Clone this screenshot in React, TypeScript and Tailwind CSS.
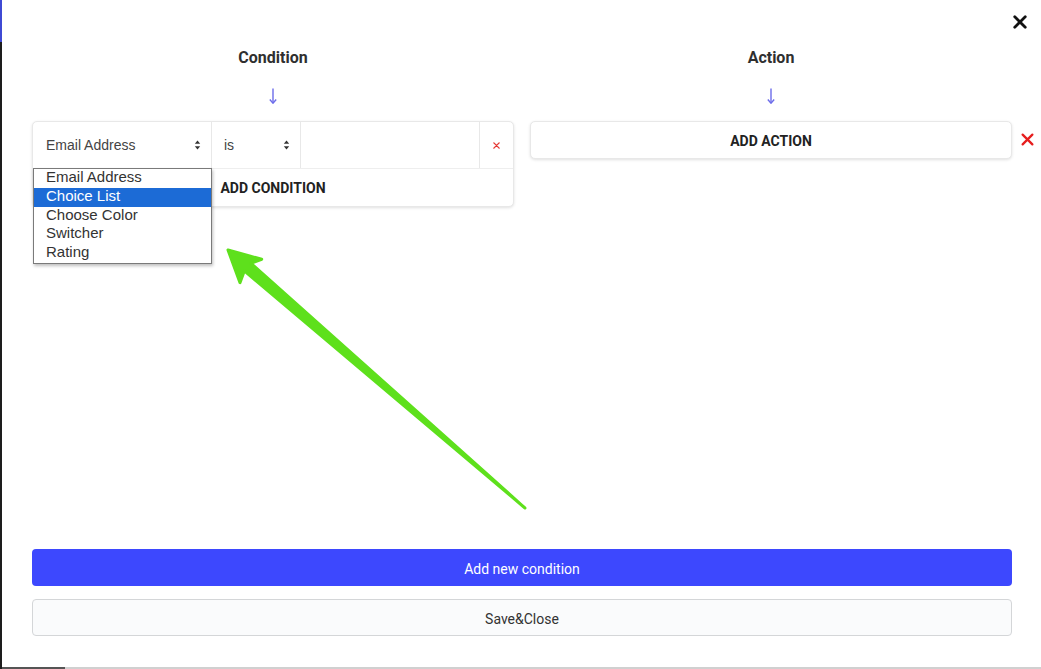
import React from 'react';

const fieldOptions = ['Email Address', 'Choice List', 'Choose Color', 'Switcher', 'Rating'];

function SelectArrows() {
  return (
    <svg width="7" height="12" viewBox="0 0 7 12" className="shrink-0">
      <path d="M0.8 4.8 L3.5 1.4 L6.2 4.8 Z" fill="#333" />
      <path d="M0.8 7.2 L3.5 10.6 L6.2 7.2 Z" fill="#333" />
    </svg>
  );
}

function DownArrow() {
  return (
    <svg width="10" height="16" viewBox="0 0 10 16">
      <path d="M5 0.5 V15" stroke="#6c6cea" strokeWidth="1.4" />
      <path d="M1.8 11.5 L5 15.2 L8.2 11.5" stroke="#6c6cea" strokeWidth="1.4" fill="none" />
    </svg>
  );
}

function Cross({ size, color, width }: { size: number; color: string; width: number }) {
  return (
    <svg width={size} height={size} viewBox="0 0 12 12">
      <path d="M1.5 1.5 L10.5 10.5 M10.5 1.5 L1.5 10.5" stroke={color} strokeWidth={width} strokeLinecap="round" />
    </svg>
  );
}

export default function App() {
  return (
    <div className="relative flex h-[669px] w-[1041px] overflow-hidden bg-white">
      {/* edge of the window behind */}
      <div className="flex w-[2px] flex-col">
        <div className="h-[42px] bg-[#3f4ad4]" />
        <div className="flex-1 bg-[#1d1d1d]" />
      </div>

      <div className="flex flex-1 flex-col">
        <div className="flex justify-end pt-[15px] pr-[14px]">
          <button className="flex h-[14px] w-[14px] items-center justify-center">
            <Cross size={14} color="#111" width={2.4} />
          </button>
        </div>

        <div className="grid grid-cols-2 gap-4 pl-[30px] pr-[29px] pt-[17px]">
          {/* Condition column */}
          <div className="flex flex-col items-center">
            <h2 className="h-[24px] text-[16px] font-bold leading-[24px] text-[#2f2f2f] [font-family:Roboto,'Liberation_Sans',sans-serif]">
              Condition
            </h2>
            <div className="mt-[18px] h-[15px]">
              <DownArrow />
            </div>
            <div className="relative mt-[18px] w-full rounded-[5px] border border-[#e8e8e8] bg-white shadow-[0_1px_3px_rgba(0,0,0,0.12)]">
              <div className="flex h-[46px] text-[14px] text-[#444] [font-family:'Liberation_Sans',Arial,sans-serif]">
                <div className="flex w-[179px] items-center justify-between border-r border-[#e8e8e8] pl-[13px] pr-[10px]">
                  <span>Email Address</span>
                  <SelectArrows />
                </div>
                <div className="flex w-[89px] items-center justify-between border-r border-[#e8e8e8] pl-[12px] pr-[10px]">
                  <span>is</span>
                  <SelectArrows />
                </div>
                <div className="flex-1 border-r border-[#e8e8e8]" />
                <div className="flex w-[33px] items-center justify-center">
                  <Cross size={7} color="#e53935" width={2.4} />
                </div>
              </div>
              <div className="flex h-[38px] items-center justify-center border-t border-[#eeeeee] pt-[2px] text-[14px] font-bold text-[#222] [font-family:Roboto,'Liberation_Sans',sans-serif]">
                ADD CONDITION
              </div>

              {/* open native select list */}
              <ul className="absolute left-0 top-[46px] w-[179px] border border-[#7a7a7a] bg-white shadow-[1px_2px_3px_rgba(0,0,0,0.25)] text-[15px] leading-[15px] text-[#333] [font-family:'Liberation_Sans',Arial,sans-serif]">
                {fieldOptions.map((opt) => (
                  <li
                    key={opt}
                    className={`h-[18.8px] pl-[12px] ${opt === 'Choice List' ? 'bg-[#1c6bd6] text-white' : ''}`}
                  >
                    {opt}
                  </li>
                ))}
              </ul>
            </div>
          </div>

          {/* Action column */}
          <div className="flex flex-col items-center">
            <h2 className="h-[24px] text-[16px] font-bold leading-[24px] text-[#2f2f2f] [font-family:Roboto,'Liberation_Sans',sans-serif]">
              Action
            </h2>
            <div className="mt-[18px] h-[15px]">
              <DownArrow />
            </div>
            <div className="relative mt-[18px] w-full">
              <div className="flex h-[38px] items-center justify-center rounded-[5px] border border-[#e8e8e8] bg-white pt-[2px] text-[14px] font-bold text-[#222] shadow-[0_1px_3px_rgba(0,0,0,0.12)] [font-family:Roboto,'Liberation_Sans',sans-serif]">
                ADD ACTION
              </div>
              <button className="absolute left-[calc(100%+9px)] top-[12px] flex h-[13px] w-[13px] items-center justify-center">
                <Cross size={13} color="#e61e1e" width={2.1} />
              </button>
            </div>
          </div>
        </div>

        <div className="flex-1" />

        <div className="flex flex-col gap-[13px] pl-[30px] pr-[29px] pb-[31px] text-[14px] [font-family:Roboto,'Liberation_Sans',sans-serif]">
          <button className="h-[37px] rounded-[4px] bg-[#3d48fe] pt-[3px] text-white">Add new condition</button>
          <button className="h-[37px] rounded-[4px] border border-[#d4d6d8] bg-[#fafbfc] pt-[3px] text-[#333]">
            Save&amp;Close
          </button>
        </div>

        <div className="flex h-[2px]">
          <div className="w-[63px] bg-[#555]" />
          <div className="flex-1 bg-[#d0d0d0]" />
        </div>
      </div>

      {/* annotation arrow drawn over the screenshot */}
      <svg className="pointer-events-none absolute left-0 top-0" width="1041" height="669" viewBox="0 0 1041 669">
        <path
          d="M228 250 L261.7 259.3 L250.9 263.3 L525 508 L244.3 270.9 L240 282.7 Z"
          fill="#5ee01c"
          stroke="#5ee01c"
          strokeWidth="3"
          strokeLinejoin="round"
        />
      </svg>
    </div>
  );
}
